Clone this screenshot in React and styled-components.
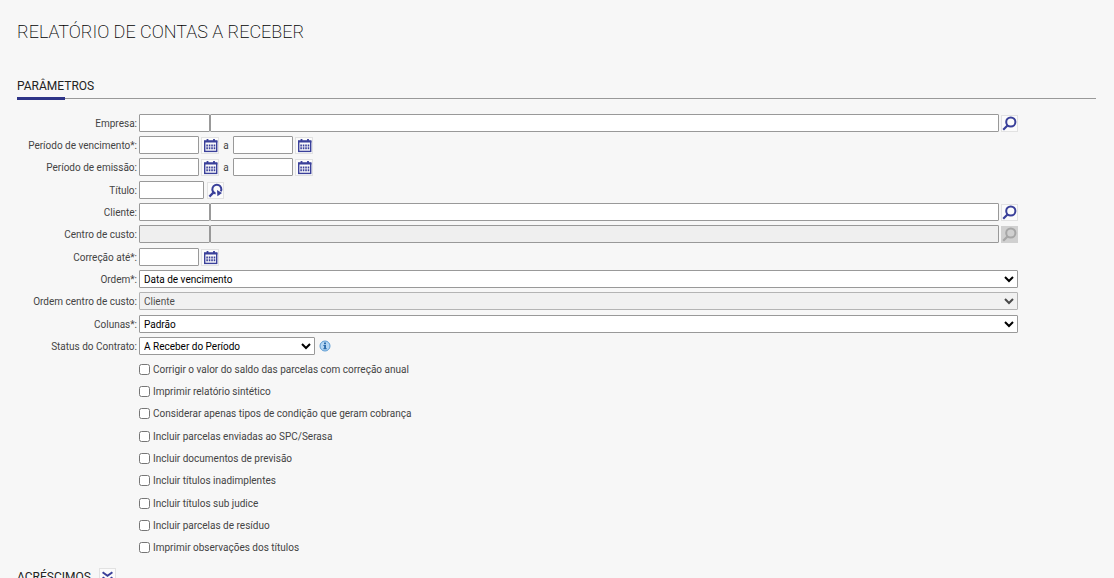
import React from 'react'
import styled, { createGlobalStyle } from 'styled-components'

function CalendarIcon() {
    return (
        <svg width="15" height="15" viewBox="0 0 15 15" fill="none" aria-hidden="true">
            <rect x="1.7" y="3" width="12" height="10.4" stroke="#3a409a" strokeWidth="1.4" />
            <path d="M1 3.6h13.4M4.5 1v3M11 1v3" stroke="#3a409a" strokeWidth="1.8" />
            <path d="M3.3 7.4h9M3.3 10.2h9" stroke="#3a409a" strokeWidth="2" strokeDasharray="1.6 0.86" />
        </svg>
    )
}

function SearchIcon() {
    return (
        <svg width="15" height="15" viewBox="0 0 15 15" fill="none" aria-hidden="true">
            <circle cx="8.8" cy="6" r="4.6" stroke="currentColor" strokeWidth="2" />
            <path d="M5.7 9.2L1.2 13.8" stroke="currentColor" strokeWidth="2.2" />
        </svg>
    )
}

function SearchNextIcon() {
    return (
        <svg width="15" height="15" viewBox="0 0 15 15" fill="none" aria-hidden="true">
            <path d="M7.6 10.6A4.5 4.5 0 1 1 12.8 8.4" stroke="#3a409a" strokeWidth="2" />
            <path d="M5.6 9.4L1.4 13.6" stroke="#3a409a" strokeWidth="2.2" />
            <path d="M9 7L14 10L9.4 13.2Z" fill="#3a409a" />
        </svg>
    )
}

function ExpandIcon() {
    return (
        <svg width="15" height="15" viewBox="0 0 15 15" fill="none" aria-hidden="true">
            <path d="M2.6 3.2L7.5 6.8L12.4 3.2M2.6 8.2L7.5 11.8L12.4 8.2" stroke="#3a409a" strokeWidth="2" />
        </svg>
    )
}

function InfoIcon() {
    return (
        <svg width="12" height="12" viewBox="0 0 12 12" fill="none" aria-hidden="true">
            <circle cx="6" cy="6" r="5" fill="#b5d7f3" stroke="#5b9bd3" />
            <path d="M5 2.6h2v1.6H5zM4.4 5h2.6v3.2h.8v1H4.3v-1h.8V6h-.7z" fill="#2c6cab" />
        </svg>
    )
}

function LookupField({ id, label, disabled }) {
    return (
        <Row>
            <Label htmlFor={id}>{label}</Label>
            <Lookup>
                <TextInput id={id} $width="71px" disabled={disabled} />
                <Description aria-label={`${label} descrição`} disabled={disabled} />
            </Lookup>
            <IconButton type="button" aria-label="Pesquisar" disabled={disabled}><SearchIcon /></IconButton>
        </Row>
    )
}

function DateField({ id, label }) {
    return (
        <>
            <TextInput id={id} aria-label={label} $width="60px" />
            <IconButton type="button" aria-label="Calendário" $width="18px"><CalendarIcon /></IconButton>
        </>
    )
}

function PeriodField({ id, label }) {
    return (
        <Row>
            <Label htmlFor={id}>{label}</Label>
            <DateField id={id} />
            <Until>a</Until>
            <DateField id={`${id}-fim`} label={`${label} fim`} />
        </Row>
    )
}

function SelectField({ id, label, value, width, disabled, children }) {
    return (
        <Row>
            <Label htmlFor={id}>{label}</Label>
            <Select id={id} $width={width} disabled={disabled}>
                <option>{value}</option>
            </Select>
            {children}
        </Row>
    )
}

const options = [
    [
        'Corrigir o valor do saldo das parcelas com correção anual',
        'Imprimir relatório sintético',
        'Considerar apenas tipos de condição que geram cobrança',
    ],
    [
        'Incluir parcelas enviadas ao SPC/Serasa',
        'Incluir documentos de previsão',
        'Incluir títulos inadimplentes',
    ],
    [
        'Incluir títulos sub judice',
        'Incluir parcelas de resíduo',
        'Imprimir observações dos títulos',
    ],
]

function App() {
    return (
        <Page>
            <GlobalStyle />
            <Title>Relatório de Contas a Receber</Title>
            <SectionHeader>
                <SectionTitle>Parâmetros</SectionTitle>
            </SectionHeader>
            <Form>
                <Group>
                    <LookupField id="empresa" label="Empresa:" />
                    <PeriodField id="vencimento" label="Período de vencimento*:" />
                    <PeriodField id="emissao" label="Período de emissão:" />
                </Group>
                <Group>
                    <Row>
                        <Label htmlFor="titulo">Título:</Label>
                        <TextInput id="titulo" $width="65px" />
                        <IconButton type="button" aria-label="Pesquisar título" $spaced><SearchNextIcon /></IconButton>
                    </Row>
                    <LookupField id="cliente" label="Cliente:" />
                    <LookupField id="centro" label="Centro de custo:" disabled />
                </Group>
                <Group>
                    <Row>
                        <Label htmlFor="correcao">Correção até*:</Label>
                        <DateField id="correcao" />
                    </Row>
                    <SelectField id="ordem" label="Ordem*:" value="Data de vencimento" />
                    <SelectField id="ordem-centro" label="Ordem centro de custo:" value="Cliente" disabled />
                </Group>
                <Group>
                    <SelectField id="colunas" label="Colunas*:" value="Padrão" />
                    <SelectField id="status" label="Status do Contrato:" value="A Receber do Período" width="176px">
                        <InfoButton type="button" aria-label="Informação"><InfoIcon /></InfoButton>
                    </SelectField>
                </Group>
                {options.map((group) => (
                    <Group key={group[0]}>
                        {group.map((text) => (
                            <Option key={text}>
                                <Checkbox type="checkbox" />
                                {text}
                            </Option>
                        ))}
                    </Group>
                ))}
            </Form>
            <SectionHeader>
                <SectionTitle>Acréscimos</SectionTitle>
                <IconButton type="button" aria-label="Expandir acréscimos"><ExpandIcon /></IconButton>
            </SectionHeader>
        </Page>
    )
}

export default App

const GlobalStyle = createGlobalStyle`
*{
    box-sizing: border-box;
}
body{
    margin: 0;
    background: #f7f7f7;
    color: #444;
    font-family: Roboto, "Liberation Sans", sans-serif;
    font-size: 10px;
    overflow-x: hidden;
}
html{
    scrollbar-width: none;
}
`

const Page = styled.main`
padding: 20px 18px 0 17px;
`

const Title = styled.h1`
margin: 0 0 32px;
font-size: 18px;
font-weight: 200;
line-height: 24px;
text-transform: uppercase;
color: #000;
`

const SectionHeader = styled.header`
position: relative;
display: flex;
align-items: center;
gap: 8px;
height: 23px;
padding-bottom: 3px;
border-bottom: 1px solid #999;

&:after{
    content: "";
    position: absolute;
    left: 0;
    bottom: -2px;
    width: 48px;
    height: 3px;
    background: #2e3487;
}
`

const SectionTitle = styled.h2`
margin: 0;
font-size: 12px;
font-weight: 400;
line-height: 20px;
text-transform: uppercase;
color: #222;
`

const Form = styled.form`
display: flex;
flex-direction: column;
gap: 5px;
padding: 15px 78px 11px 0;
`

const Group = styled.div`
display: flex;
flex-direction: column;
gap: 4px;
`

const Row = styled.div`
display: flex;
align-items: center;
gap: 2px;
height: 18px;
`

const Label = styled.label`
flex: 0 0 120px;
text-align: right;
white-space: nowrap;
`

const Lookup = styled.div`
display: flex;
flex: 1;
`

const TextInput = styled.input`
width: ${(props) => props.$width};
height: 18px;
padding: 0 4px;
border: 1px solid #999;
border-radius: 1px;
background: #fff;
font: inherit;

&:disabled{
    background: #efefef;
}
`

const Description = styled(TextInput)`
flex: 1;
min-width: 0;
`

const Select = styled.select`
width: ${(props) => props.$width || '100%'};
height: 18px;
padding: 0;
border: 1px solid #999;
border-radius: 1px;
background: #fff;
color: #000;
font: inherit;

&:disabled{
    background: #efefef;
    color: #000;
    opacity: 0.7;
}
`

const IconButton = styled.button`
display: flex;
flex: none;
align-items: center;
justify-content: center;
width: ${(props) => props.$width || '17px'};
height: 17px;
margin-left: ${(props) => (props.$spaced ? '1px' : '0')};
padding: 0;
border: 1px solid #e2e2e2;
background: #fbfbfb;
color: #3a409a;

&:disabled{
    border-color: #d0d0d0;
    background: #d0d0d0;
    color: #a6a6a6;
}
`

const InfoButton = styled.button`
display: flex;
margin-left: 2px;
padding: 0;
border: 0;
background: none;
`

const Until = styled.span`
width: 10px;
text-align: center;
`

const Option = styled.label`
display: flex;
align-items: center;
gap: 3px;
height: 18px;
padding-left: 122px;
`

const Checkbox = styled.input`
width: 11px;
height: 11px;
margin: 0;
`
